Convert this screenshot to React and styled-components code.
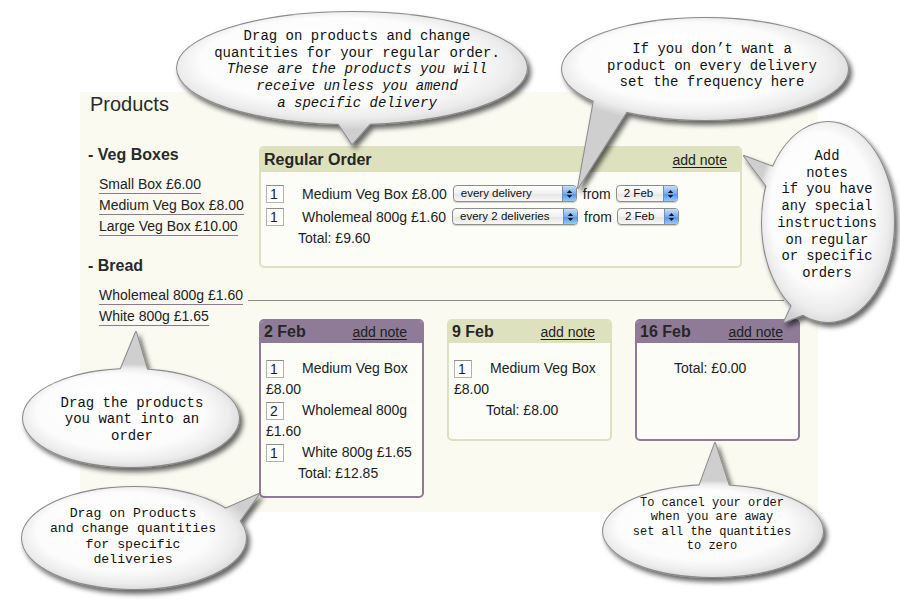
import React from 'react';
import styled, { createGlobalStyle } from 'styled-components';

/* Global */
const GlobalStyle = createGlobalStyle`
  html, body {
    margin: 0;
    padding: 0;
    background: #ffffff;
  }
  body {
    font-family: "Liberation Sans", Arial, sans-serif;
    color: #222;
  }
`;

const PURPLE = '#8f7a98';
const OLIVE = '#dee1be';

/* Page */
const Page = styled.div`
  position: relative;
  width: 900px;
  height: 600px;
  overflow: hidden;
`;

const Panel = styled.div`
  margin: 92px 0 0 80px;
  width: 738px;
  height: 420px;
  box-sizing: border-box;
  padding-left: 8px;
  background: #fafaf1;
`;

const Heading = styled.h1`
  margin: 0 0 0 2px;
  font-size: 20px;
  font-weight: normal;
  line-height: 24px;
  color: #2a2a2a;
`;

const Columns = styled.div`
  display: flex;
  margin-top: 30px;
`;

/* Product list */
const Sidebar = styled.div`
  flex: none;
  width: 171px;
`;

const Group = styled.div`
  & + & {
    margin-top: 19px;
  }
`;

const GroupTitle = styled.h2`
  margin: -1px 0 10px;
  font-size: 16px;
  font-weight: bold;
  line-height: 20px;
  color: #2a2a2a;
`;

const LinkList = styled.div`
  display: flex;
  flex-direction: column;
  align-items: flex-start;
  padding-left: 11px;
`;

const ProductLink = styled.span`
  display: inline-block;
  font-size: 14px;
  line-height: 18px;
  border-bottom: 1px solid #8b7b90;
  margin-bottom: 2px;
  color: #222;
`;

/* Orders */
const Orders = styled.div`
  display: flex;
  flex-direction: column;
  align-items: flex-start;
`;

const OrderBox = styled.div`
  width: ${p => p.$width}px;
  min-height: ${p => p.$minHeight}px;
  box-sizing: border-box;
  border: 2px solid ${p => (p.$tone === 'purple' ? PURPLE : OLIVE)};
  border-radius: 5px;
  background: #fdfdf8;
`;

const BoxHeader = styled.div`
  display: flex;
  justify-content: space-between;
  align-items: center;
  height: ${p => p.$height}px;
  padding: 0 ${p => p.$padRight}px 0 3px;
  background: ${p => (p.$tone === 'purple' ? PURPLE : OLIVE)};
  border-radius: 3px 3px 0 0;
`;

const BoxTitle = styled.span`
  font-size: 16px;
  font-weight: bold;
  color: #262626;
`;

const NoteLink = styled.span`
  font-size: 14px;
  text-decoration: underline;
  text-underline-offset: 2px;
  color: #1e1e1e;
`;

const RegularBody = styled.div`
  padding: 10px 0 0 5px;
  font-size: 14px;
`;

const Row = styled.div`
  display: flex;
  align-items: center;
  height: 23px;
  white-space: nowrap;
`;

const Qty = styled.span`
  display: inline-block;
  width: 18px;
  height: 18px;
  box-sizing: border-box;
  border: 1px solid #b3b3b3;
  border-top-color: #8c8c8c;
  background: #fff;
  padding-left: 3px;
  font-size: 14px;
  line-height: 16px;
  vertical-align: middle;
  margin-right: 18px;
`;

const From = styled.span`
  margin: 0 5px 0 6px;
`;

const Total = styled.div`
  padding-left: ${p => p.$indent}px;
  font-size: 14px;
  line-height: 21px;
`;

/* Mac style popup */
const SelectBox = styled.span`
  display: inline-flex;
  align-items: stretch;
  width: ${p => p.$width}px;
  height: 17px;
  margin-left: ${p => p.$offset || 0}px;
  box-sizing: border-box;
  border: 1px solid #8d8d8d;
  border-radius: 4px;
  background: linear-gradient(#ffffff, #f1f1f1 50%, #e4e4e4 51%, #f7f7f7);
  box-shadow: 0 1px 1px rgba(0, 0, 0, 0.18);
  overflow: hidden;
  font-size: 11.5px;
  line-height: 15px;
  color: #111;
`;

const SelectLabel = styled.span`
  flex: 1;
  padding-left: 7px;
  overflow: hidden;
  white-space: nowrap;
`;

const SelectCap = styled.span`
  flex: none;
  display: flex;
  align-items: center;
  justify-content: center;
  width: 13px;
  border-left: 1px solid #6f8fc2;
  background: linear-gradient(#c4ddfb, #77aef0 50%, #4e90eb 51%, #9cc8f7);
`;

const Select = ({ width, offset, children }) => (
  <SelectBox $width={width} $offset={offset}>
    <SelectLabel>{children}</SelectLabel>
    <SelectCap>
      <svg width="7" height="10" viewBox="0 0 7 10">
        <polygon points="0.8,4 3.5,1 6.2,4" fill="#111" />
        <polygon points="0.8,6 3.5,9 6.2,6" fill="#111" />
      </svg>
    </SelectCap>
  </SelectBox>
);

const DeliveryRow = styled.div`
  display: flex;
  align-items: flex-start;
  gap: 23px;
  margin-top: 51px;
`;

const CardBody = styled.div`
  padding: 15px 4px 12px 5px;
  font-size: 14px;
  line-height: 21px;
`;

const Item = styled.div``;

const ItemName = styled.span``;

/* Callouts */
const Layer = styled.div`
  position: absolute;
  left: 0;
  top: 0;
  width: 900px;
  height: 600px;
  pointer-events: none;
`;

const CalloutText = styled.div`
  position: absolute;
  left: ${p => p.$x}px;
  top: ${p => p.$y}px;
  transform: translate(-50%, -50%);
  font-family: "Liberation Mono", "Courier New", monospace;
  font-size: ${p => p.$size}px;
  line-height: ${p => p.$lh}px;
  text-align: center;
  white-space: pre;
  color: #111;
`;

const Italic = styled.span`
  font-style: italic;
`;

const Connector = styled.div`
  position: absolute;
  left: 248px;
  top: 300px;
  width: 536px;
  height: 1px;
  background: #8a8a8a;
`;

const Callout = ({ id, ellipse, tails, text, size, lh, lines }) => {
  const [cx, cy, rx, ry] = ellipse;
  const shapes = fill => (
    <>
      <ellipse cx={cx} cy={cy} rx={rx} ry={ry} fill={fill} />
      {tails.map(t => (
        <polygon key={t} points={t} fill={fill} strokeLinejoin="round" />
      ))}
    </>
  );
  return (
    <Layer>
      <svg width="900" height="600" viewBox="0 0 900 600">
        <defs>
          <radialGradient
            id={`fill-${id}`}
            gradientUnits="userSpaceOnUse"
            cx="0"
            cy="0"
            r="1"
            fx="-0.3"
            fy="-0.4"
            gradientTransform={`translate(${cx} ${cy}) scale(${rx * 1.1} ${ry * 1.1})`}
          >
            <stop offset="0" stopColor="#ffffff" />
            <stop offset="0.7" stopColor="#fcfcfc" />
            <stop offset="0.87" stopColor="#ececec" />
            <stop offset="1" stopColor="#cfcfcf" />
          </radialGradient>
          <filter id={`shadow-${id}`} filterUnits="userSpaceOnUse" x="0" y="0" width="900" height="600">
            <feDropShadow dx="3" dy="4" stdDeviation="2.4" floodColor="#000" floodOpacity="0.6" />
          </filter>
        </defs>
        <g filter={`url(#shadow-${id})`} stroke="#8a8a8a" strokeWidth="2">
          {shapes('#d8d8d8')}
        </g>
        {shapes(`url(#fill-${id})`)}
      </svg>
      <CalloutText $x={text[0]} $y={text[1]} $size={size} $lh={lh}>
        {lines.map((l, i) => (
          <div key={i}>{l.italic ? <Italic>{l.t}</Italic> : l.t}</div>
        ))}
      </CalloutText>
    </Layer>
  );
};

const callouts = [
  {
    id: 'regular',
    ellipse: [352, 68, 175, 56],
    tails: ['336,120 374,119 352,144'],
    text: [357, 70],
    size: 14,
    lh: 16.7,
    lines: [
      { t: 'Drag on products and change' },
      { t: 'quantities for your regular order.' },
      { t: 'These are the products you will', italic: true },
      { t: 'receive unless you amend', italic: true },
      { t: 'a specific delivery', italic: true },
    ],
  },
  {
    id: 'frequency',
    ellipse: [705, 69, 143, 51],
    tails: ['594,100 627,111 578,188'],
    text: [712, 66],
    size: 14,
    lh: 16.5,
    lines: [
      { t: 'If you don\u2019t want a' },
      { t: 'product on every delivery' },
      { t: 'set the frequency here' },
    ],
  },
  {
    id: 'notes',
    ellipse: [828, 222, 66, 100],
    tails: ['776,168 771,192 744,156', '798,292 820,308 784,322'],
    text: [827, 216],
    size: 13.8,
    lh: 16.7,
    lines: [
      { t: 'Add' },
      { t: 'notes' },
      { t: 'if you have' },
      { t: 'any special' },
      { t: 'instructions' },
      { t: 'on regular' },
      { t: 'or specific' },
      { t: 'orders' },
    ],
  },
  {
    id: 'products',
    ellipse: [131, 418, 108, 49],
    tails: ['117,378 149,376 136,332'],
    text: [132, 420],
    size: 14,
    lh: 16.4,
    lines: [{ t: 'Drag the products' }, { t: 'you want into an' }, { t: 'order' }],
  },
  {
    id: 'deliveries',
    ellipse: [134, 538, 112, 51],
    tails: ['218,512 236,526 259,494'],
    text: [133, 537],
    size: 13.2,
    lh: 15.4,
    lines: [
      { t: 'Drag on Products' },
      { t: 'and change quantities' },
      { t: 'for specific' },
      { t: 'deliveries' },
    ],
  },
  {
    id: 'cancel',
    ellipse: [713, 531, 110, 46],
    tails: ['697,492 731,492 715,443'],
    text: [712, 525],
    size: 12,
    lh: 14.4,
    lines: [
      { t: 'To cancel your order' },
      { t: 'when you are away' },
      { t: 'set all the quantities' },
      { t: 'to zero' },
    ],
  },
];

const products = [
  { title: 'Veg Boxes', items: ['Small Box £6.00', 'Medium Veg Box £8.00', 'Large Veg Box £10.00'] },
  { title: 'Bread', items: ['Wholemeal 800g £1.60', 'White 800g £1.65'] },
];

const deliveries = [
  {
    date: '2 Feb',
    tone: 'purple',
    items: [
      ['1', 'Medium Veg Box £8.00'],
      ['2', 'Wholemeal 800g £1.60'],
      ['1', 'White 800g £1.65'],
    ],
    total: '£12.85',
  },
  { date: '9 Feb', tone: 'olive', items: [['1', 'Medium Veg Box £8.00']], total: '£8.00' },
  { date: '16 Feb', tone: 'purple', items: [], total: '£0.00' },
];

class App extends React.Component {
  render() {
    return (
      <Page>
        <GlobalStyle />
        <Panel>
          <Heading>Products</Heading>
          <Columns>
            <Sidebar>
              {products.map(g => (
                <Group key={g.title}>
                  <GroupTitle>- {g.title}</GroupTitle>
                  <LinkList>
                    {g.items.map(i => (
                      <ProductLink key={i}>{i}</ProductLink>
                    ))}
                  </LinkList>
                </Group>
              ))}
            </Sidebar>
            <Orders>
              <OrderBox $width={483} $minHeight={122} $tone="olive">
                <BoxHeader $height={24} $padRight={13} $tone="olive">
                  <BoxTitle>Regular Order</BoxTitle>
                  <NoteLink>add note</NoteLink>
                </BoxHeader>
                <RegularBody>
                  <Row>
                    <Qty>1</Qty>
                    <ItemName>Medium Veg Box £8.00</ItemName>
                    <Select width={124} offset={6}>every delivery</Select>
                    <From>from</From>
                    <Select width={62}>2 Feb</Select>
                  </Row>
                  <Row>
                    <Qty>1</Qty>
                    <ItemName>Wholemeal 800g £1.60</ItemName>
                    <Select width={126} offset={6}>every 2 deliveries</Select>
                    <From>from</From>
                    <Select width={62}>2 Feb</Select>
                  </Row>
                  <Total $indent={32}>Total: £9.60</Total>
                </RegularBody>
              </OrderBox>
              <DeliveryRow>
                {deliveries.map(d => (
                  <OrderBox key={d.date} $width={165} $minHeight={122} $tone={d.tone}>
                    <BoxHeader $height={22} $padRight={15} $tone={d.tone}>
                      <BoxTitle>{d.date}</BoxTitle>
                      <NoteLink>add note</NoteLink>
                    </BoxHeader>
                    <CardBody>
                      {d.items.map(([q, name]) => (
                        <Item key={name}>
                          <Qty>{q}</Qty>
                          <ItemName>{name}</ItemName>
                        </Item>
                      ))}
                      <Total $indent={32}>Total: {d.total}</Total>
                    </CardBody>
                  </OrderBox>
                ))}
              </DeliveryRow>
            </Orders>
          </Columns>
        </Panel>
        <Connector />
        {callouts.map(c => (
          <Callout key={c.id} {...c} />
        ))}
      </Page>
    );
  }
}

export default App;
